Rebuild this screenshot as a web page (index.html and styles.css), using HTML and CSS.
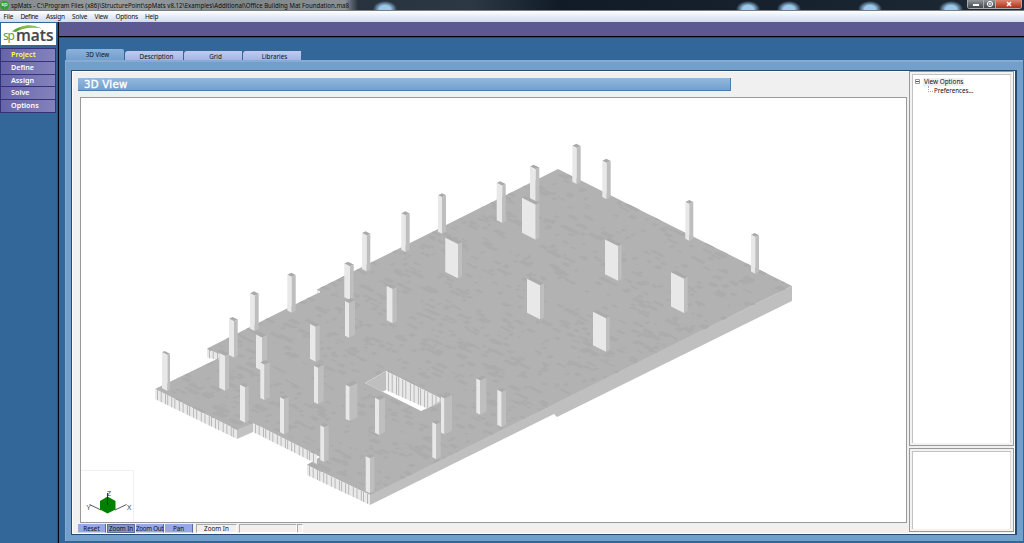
FILE: index.html
```html
<!DOCTYPE html>
<html lang="en">
<head>
<meta charset="utf-8">
<title>spMats</title>
<link rel="stylesheet" href="styles.css">
</head>
<body>
<div class="app">
  <header class="titlebar">
    <span class="app-icon">sp</span>
    <svg class="title" viewBox="0 0 345 10"><text x="1" y="7.5" textLength="338" lengthAdjust="spacingAndGlyphs">spMats - C:\Program Files (x86)\StructurePoint\spMats v8.12\Examples\Additional\Office Building Mat Foundation.ma8</text></svg>
    <div class="win-buttons">
      <span class="win min"><svg viewBox="0 0 8 8"><rect x="1" y="4" width="6" height="2" fill="#fff"/></svg></span>
      <span class="win max"><svg viewBox="0 0 8 8"><circle cx="4" cy="4" r="2.6" fill="none" stroke="#fff"/><path d="M4 2.5v3M2.5 4h3" stroke="#fff" stroke-width=".8"/></svg></span>
      <span class="win close"><svg viewBox="0 0 8 8"><path d="M2 2l4 4M6 2l-4 4" stroke="#fff" stroke-width="1.5"/></svg></span>
    </div>
  </header>
  <nav class="menubar">
    <svg class="labels" viewBox="0 0 200 11">
      <text x="3.5" y="7.9" textLength="10">File</text><text x="20.5" y="7.9" textLength="18">Define</text><text x="46" y="7.9" textLength="19">Assign</text><text x="72" y="7.9" textLength="15.500">Solve</text><text x="94.500" y="7.9" textLength="13.500">View</text><text x="115.500" y="7.9" textLength="22.500">Options</text><text x="145" y="7.9" textLength="13.500">Help</text>
    </svg>
  </nav>
  <div class="body">
    <aside class="sidebar">
      <svg class="logo" viewBox="0 0 55 22">
        <path d="M11 8.500C18 2 30 1 41 5.500C31 3.500 21 5 15 9Z" fill="#56a62f"/>
        <path d="M20 4C26 1.500 32 2 37 4.500C31 3.500 25 3.500 18 6.500Z" fill="#8bbd50"/>
        <text class="logo-sp" x="2" y="16.500" textLength="12">sp</text>
        <text class="logo-mats" x="15" y="18" textLength="37.500" lengthAdjust="spacingAndGlyphs">mats</text>
      </svg>
      <ul class="side-menu">
        <li class="active">Project</li><li>Define</li><li>Assign</li><li>Solve</li><li>Options</li>
      </ul>
    </aside>
    <main class="main">
      <div class="band"></div>
      <div class="tabs">
        <div class="tab current">3D View</div><div class="tab">Description</div><div class="tab">Grid</div><div class="tab">Libraries</div>
      </div>
      <section class="frame">
        <div class="workspace">
          <div class="view">
            <h1 class="heading">3D View</h1>
            <div class="canvas">
              <svg id="scene" viewBox="81 98 825 424">
                <defs>
                  <clipPath id="slab-clip"><path id="clip-shape"/></clipPath>
                  <clipPath id="hole-clip"><path d="M365 383L386 371L440 398L441 402L421 411Z"/></clipPath>
                </defs>
                <g id="slab"></g>
                <g id="hole" clip-path="url(#hole-clip)"></g>
                <g id="columns"></g>
                <g fill="none" stroke="#444" stroke-width=".9">
                  <path d="M81 470.500H133.500V522" stroke="#eee"/>
                  <path d="M101 510L89.500 504.500M115 510L126.500 504.500"/>
                  <path d="M107.500 496.500L115.500 501V509.500L107.500 513.500L100 509.500V501Z" fill="#008000" stroke="none"/>
                  <path d="M107.500 493V505" stroke="#033d03"/>
                </g>
                <g class="axis"><text x="106.800" y="495.500">Z</text><text x="86.500" y="509.500">Y</text><text x="127" y="509.500">X</text></g>
              </svg>
            </div>
            <div class="toolbar">
              <span class="tool">Reset</span><span class="tool pressed">Zoom In</span><span class="tool tight">Zoom Out</span><span class="tool">Pan</span>
              <span class="status">Zoom In</span><span class="status wide"></span><span class="status tiny"></span>
            </div>
          </div>
          <aside class="options">
            <div class="pane tree">
              <div class="node"><svg class="toggle" viewBox="0 0 7 7"><path d="M1.500 1.500h4v4h-4z" fill="#fff" stroke="#999"/><path d="M2 3.500h3" stroke="#555"/></svg><span class="selected">View Options</span></div>
              <div class="node leaf"><i class="branch"></i>Preferences...</div>
            </div>
            <div class="pane detail"></div>
          </aside>
        </div>
      </section>
    </main>
  </div>
</div>
<script src="scene.js"></script>
</body>
</html>
```

FILE: styles.css
```css
* { box-sizing: border-box; }
body { margin: 0; background: #336699; font: 6.5px/1 "Noto Sans", "Open Sans", sans-serif; color: #111; overflow: hidden; }
.app { width: 1024px; height: 543px; display: flex; flex-direction: column; }
.titlebar {
  height: 11px; flex: none; display: flex; align-items: center; position: relative;
  background:
    radial-gradient(ellipse 12px 8px at 385px 9px, #9cc8ea 45%, transparent),
    radial-gradient(ellipse 12px 8px at 748px 9px, #9cc8ea 45%, transparent),
    radial-gradient(ellipse 12px 8px at 789px 9px, #9cc8ea 45%, transparent),
    radial-gradient(ellipse 12px 8px at 870px 9px, #9cc8ea 45%, transparent),
    radial-gradient(ellipse 12px 8px at 951px 9px, #9cc8ea 45%, transparent),
    linear-gradient(90deg, #83898c 0, #9a9fa1 120px, #7d8589 230px, #8b9193 345px, #27323e 358px, #2c3945 470px, #101b27 560px, #1d2935 1024px);
  border-bottom: 1px solid #777c82;
}
.app-icon { width: 9px; height: 9px; border-radius: 50%; background: #3f9a35; color: #fff; font-size: 6px; line-height: 7px; text-align: center; }
.title { margin-left: 1px; font-size: 6.8px; width: 345px; height: 10px; fill: #0c0c0c; overflow: visible; }
.win-buttons { position: absolute; right: 2px; top: 0; display: flex; height: 9px; border-radius: 0 0 3px 3px; overflow: hidden; border: 1px solid #aaa; border-top: 0; }
.win { display: flex; justify-content: center; width: 15px; background: linear-gradient(#929599, #42484d); }
.win svg { width: 8px; height: 8px; }
.max { width: 13px; border: solid #aaa; border-width: 0 1px; }
.close { width: 25px; background: linear-gradient(#d98370, #b52e17); }
.menubar { height: 11px; flex: none; background: linear-gradient(#fff 0, #e8edf7 45%, #d3dbec); }
.labels { display: block; width: 200px; height: 11px; font-size: 6.5px; fill: #111; }
.body { flex: 1; display: flex; min-height: 0; }
.sidebar { width: 59px; padding: 1px 0 0 1px; border-right: 1px solid #050515; box-shadow: inset -1px 0 #28527c; }
.logo { display: block; width: 55px; height: 22px; background: #fff; overflow: visible; }
.logo-sp { font-size: 12px; fill: #5aa23a; }
.logo-mats { font: 600 16px "Open Sans", sans-serif; fill: #44484c; stroke: #44484c; stroke-width: .2px; }
.side-menu { list-style: none; margin: 3px 0 0 -1px; padding: 0; width: 56px; border: 1px solid #33337a; border-width: 1px 1px 0 1px; }
.side-menu li { height: 12.8px; padding: 1px 0 0 10px; font-size: 7.2px; line-height: 8px; font-weight: 600; color: #fff; background: linear-gradient(100deg, #6664a8, #8583bd); border-bottom: 1px solid #33337a; }
.side-menu .active { color: #ffff45; }
.main { flex: 1; display: flex; flex-direction: column; min-width: 0; }
.band { height: 15px; flex: none; background: #5c5891; border-bottom: 1px solid #000; box-shadow: 0 1px #234c73; }
.tabs { height: 23px; flex: none; display: flex; align-items: flex-end; padding-left: 7px; }
.tab { width: 58px; height: 9px; margin-right: 1px; background: linear-gradient(#c0cbf0, #a5b5e6); border-radius: 3px 0 0 0; text-align: center; font-size: 6.3px; line-height: 11px; padding-left: 5px; }
.tab.current { height: 11px; line-height: 11px; background: linear-gradient(#8bb3dc, #739fcb); border-radius: 3px 2px 0 0; }
.frame { margin: 0 1px 2px 6px; flex: 1; min-height: 0; background: #739fcb; border: solid #86acd5; border-width: 2px 0 0 1px; padding: 8px 6px 6px 5px; display: flex; }
.workspace { flex: 1; border: 1px solid #244b74; border-right-width: 2px; background: #f0f0f0; box-shadow: inset 1px 1px #fff, inset -1px -1px #fff; display: flex; min-width: 0; }
.view { flex: 1; min-width: 0; display: flex; flex-direction: column; padding: 7px 0 0 6px; }
.heading { margin: 0; width: 653px; height: 13px; flex: none; padding-left: 6px; font: 10.2px/13px "DejaVu Sans", sans-serif; letter-spacing: .25px; -webkit-text-stroke: .35px #fff; color: #fff; background: linear-gradient(#94b8dd, #71a0cd); border-right: 1px solid #4f7cab; border-bottom: 1px solid #4f7cab; }
.canvas { margin: 6px 2px 0 2px; height: 426px; flex: none; background: #fff; border: 1px solid #999; }
.canvas svg { display: block; width: 100%; height: 100%; }
.axis { font: 7.5px "Open Sans", sans-serif; fill: #333; }
.toolbar { display: flex; height: 9px; margin-top: 1px; }
.tool { width: 28px; margin-right: 1px; text-align: center; font-size: 6.3px; line-height: 9px; white-space: nowrap; background: #94a9e5; border-right: 1px solid #566ca8; border-bottom: 1px solid #c8d2ef; }
.pressed { background: #8496c6; border: 1px solid #5f70a0; line-height: 7px; letter-spacing: -.1px; }
.tight { font-size: 6.2px; letter-spacing: -.25px; }
.status { width: 41px; margin-left: 2px; border: 1px solid #fff; border-top-color: #aaa; border-left-color: #aaa; text-align: center; font-size: 6.3px; line-height: 8px; }
.wide { width: 58px; }
.tiny { width: 6px; margin-left: 0; }
.options { width: 106px; flex: none; display: flex; flex-direction: column; gap: 2px; padding: 0 1px 2px 0; }
.pane { background: #fff; border: 1px solid #999; box-shadow: inset 0 0 0 2px #f2f2f2, inset 3px 3px #c2c2c2, inset -3px -1px #ddd; }
.tree { height: 375px; padding: 5px 0 0 4px; }
.detail { flex: 1; }
.node { display: flex; align-items: center; height: 9.5px; font-size: 6.4px; }
.toggle { width: 7px; height: 7px; margin-right: 2px; }
.selected { background: #f0f0f0; padding: 1px; }
.leaf { padding-left: 14px; font-size: 6.2px; }
.branch { width: 5px; height: 6px; margin: -4px 1px 0 0; border: dotted #aaa; border-width: 0 0 1px 1px; }
```

FILE: scene.js
```js
const NS = "http://www.w3.org/2000/svg";
const slab = document.getElementById("slab");
const hole = document.getElementById("hole");
const columns = document.getElementById("columns");

function shape(parent, points, fill) {
  const p = document.createElementNS(NS, "polygon");
  p.setAttribute("points", points.map(q => q.join(",")).join(" "));
  p.setAttribute("fill", fill);
  parent.appendChild(p);
  return p;
}

// Vertical strips along an edge, standing for the mesh on the slab's side.
function ribs(parent, x1, y1, x2, y2, h1, h2) {
  shape(parent, [[x1, y1], [x2, y2], [x2, y2 + h2], [x1, y1 + h1]], "#e9e9e9");
  const steps = [3.7, 4.3, 2.2, 4, 3.1, 4.6];
  for (let x = x1 + 2, i = 0; x < x2 - 1; x += steps[i++ % 6]) {
    const t = (x - x1) / (x2 - x1), y = y1 + t * (y2 - y1), h = h1 + t * (h2 - h1);
    shape(parent, [[x, y], [x + 1, y + .5], [x + 1, y + .5 + h], [x, y + h]], "#b8b8b8");
  }
}

const outline = [[558,169],[792,286],[370,495],[307,465],[320,457],[253,423],[237,430],[155,389],[219,358],[207,348.500],[318,293],[317,289.500]];

shape(slab, [[370,494],[792,286],[792,301],[557,417],[554,414],[370,505]], "#bfbfbf");
shape(slab, [[237,430],[253,422],[253,432],[237,439]], "#c2c2c2");
shape(slab, outline, "#b2b2b2");
ribs(slab, 155, 389, 237, 430, 10, 9);
ribs(slab, 253, 423, 317, 455, 9, 9);
ribs(slab, 307, 465, 370, 495, 10, 10);
ribs(slab, 207, 348.5, 219, 354, 9, 6);
ribs(slab, 317, 290, 320, 291, 3, 2);

document.getElementById("clip-shape").setAttribute("d", "M" + outline.map(q => q.join(" ")).join("L") + "Z");
const mesh = document.createElementNS(NS, "g");
mesh.setAttribute("clip-path", "url(#slab-clip)");
slab.appendChild(mesh);
let seed = 41;
const rnd = () => (seed = (seed * 16807) % 2147483647) / 2147483647;
for (let i = 0; i < 2300; i++) {
  const x = 155 + rnd() * 640, y = 169 + rnd() * 325;
  const a = 2 + rnd() * rnd() * 13, b = 1.5 + rnd() * 3;
  shape(mesh, [[x, y], [x + a, y + a / 2], [x + a - b, y + a / 2 + b / 2], [x - b, y + b / 2]], "#acacac");
}

// Opening in the slab.
shape(hole, [[360,365],[445,365],[445,420],[360,420]], "#fff");
shape(hole, [[360,386],[386,371],[386,390],[382,392],[360,405]], "#bfbfbf");
ribs(hole, 386, 371, 442, 399, 19, 16);
shape(hole, [[428,408],[442,400],[442,414]], "#bfbfbf");

// Each column: left, middle and right x, top of the back corner, foot of the front corner.
const data = [
  [572.3,576.7,580.7,143.7,184],[602.3,606.7,610.7,158.7,199.3],[530,535.7,539.3,164.7,202],[496.7,502.3,505.7,181.3,223],
  [438,442,446,193.3,233.7],[401.3,405.7,409.7,211.3,252],[522,535.7,539.3,196,239.7],[685.3,689.3,693.3,200,240.7],
  [362,366.7,370.3,231.3,271.3],[751,755.3,759,233,273.7],[445.3,458,462,235.7,278.3],[605,618,621.7,237.7,280.7],
  [344.3,350,353.7,261.7,300],[287.3,291.7,295.7,272.7,312.7],[671,684,687.7,270.3,313],[527,540,544,276.7,319.3],
  [386.7,392.7,396.7,284,323.3],[250,254.7,258.7,291.3,331],[345,349,355,298,337.7],[593,606,609.7,310,351.7],
  [229,234,237.7,317,357.5],[310,315.7,319.7,322,361.7],[256,262,267,332,370.7],[162,167.5,170,351,391],
  [219.3,225,229,351,390.7],[260.3,264.5,269.7,360,400],[314,318,323.7,363,404],[476.3,480.3,486.3,375.5,414.7],
  [345.7,349.7,357.3,381,421],[240,245.3,248.7,383,422.7],[497.3,501.7,506,387.7,427],[441,444.5,452,393,434.3],
  [280,284,288.7,395,434.3],[375,379.3,385,395,435],[432.3,436.3,440.7,420,459.3],[320.3,324.3,328.7,423,462],
  [365.7,370,374.3,454,493.3]
];
for (const [l, m, r, top, foot] of data) {
  const a = (m - l) / 2, b = (r - m) / 2;
  shape(columns, [[l, top + b], [l + r - m, top], [r, top + a], [m, top + a + b]], "#aaa");
  shape(columns, [[l, top + b], [m, top + a + b], [m, foot], [l, foot - a]], "#e8e8e8");
  shape(columns, [[m, top + a + b], [r, top + a], [r, foot - b], [m, foot]], "#bebebe");
}
```
